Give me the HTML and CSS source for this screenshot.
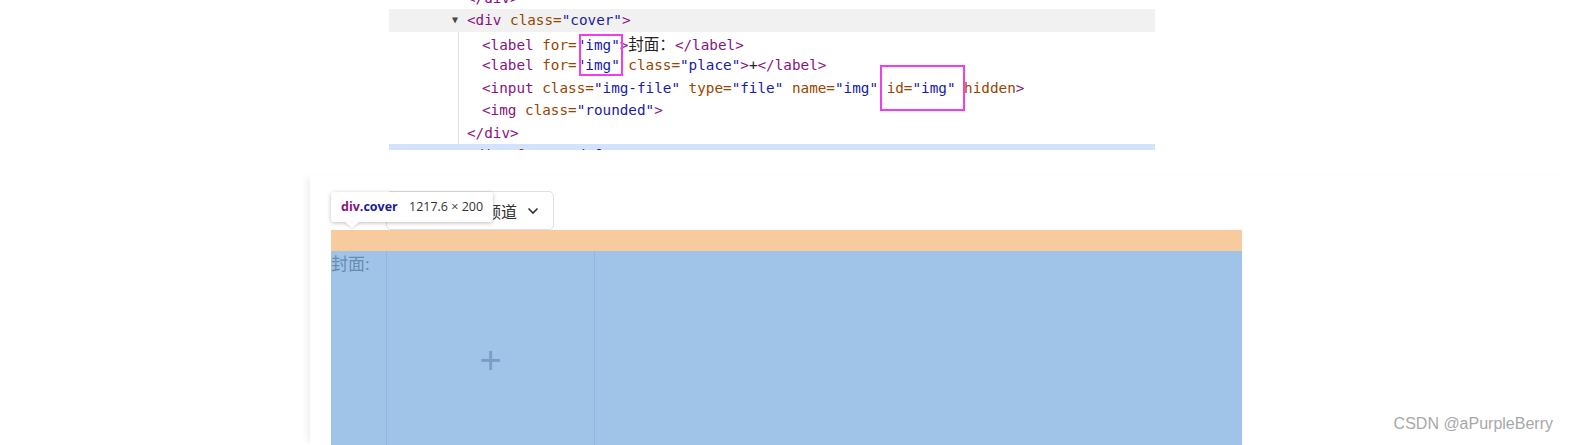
FILE: index.html
```html
<!DOCTYPE html>
<html lang="zh">
<head>
  <meta charset="UTF-8" />
  <title>div.cover</title>
  <link rel="stylesheet" href="styles.css">
</head>
<body>
  <div class="elements">
    <div class="tree">
      <div class="line lv1"><span class="tag">&lt;/div&gt;</span></div>
      <div class="line lv1 hover"><span class="arrow">▼</span><span class="tag">&lt;div </span><span class="attr">class=</span><span class="val">"cover"</span><span class="tag">&gt;</span></div>
      <div class="children">
        <div class="line lv2"><span class="tag">&lt;label </span><span class="attr">for=</span><span class="val">"img"</span><span class="tag">&gt;</span><span class="txt cjk">封面：</span><span class="tag">&lt;/label&gt;</span></div>
        <div class="line lv2"><span class="tag">&lt;label </span><span class="attr">for=</span><span class="val">"img"</span> <span class="attr">class=</span><span class="val">"place"</span><span class="tag">&gt;</span><span class="txt">+</span><span class="tag">&lt;/label&gt;</span></div>
        <div class="line lv2"><span class="tag">&lt;input </span><span class="attr">class=</span><span class="val">"img-file"</span> <span class="attr">type=</span><span class="val">"file"</span> <span class="attr">name=</span><span class="val">"img"</span> <span class="attr">id=</span><span class="val">"img"</span> <span class="attr">hidden</span><span class="tag">&gt;</span></div>
        <div class="line lv2"><span class="tag">&lt;img </span><span class="attr">class=</span><span class="val">"rounded"</span><span class="tag">&gt;</span></div>
        <div class="line lv1b"><span class="tag">&lt;/div&gt;</span></div>
      </div>
      <div class="line lv0 selected"><span class="arrow">▶</span><span class="tag">&lt;div </span><span class="attr">class=</span><span class="val">"title"</span><span class="tag">&gt;</span></div>
    </div>
    <div class="mark mark-for"></div>
    <div class="mark mark-id"></div>
  </div>

  <div class="page">
    <div class="select">
      <span class="select-text">选择频道</span>
      <svg class="chevron" width="12" height="8" viewBox="0 0 12 8"><path d="M1.5 1.5 L6 6 L10.5 1.5" fill="none" stroke="#333" stroke-width="1.6"/></svg>
    </div>
    <div class="margin-hl"></div>
    <div class="cover">
      <label class="cover-label">封面:</label>
      <label class="place"><span class="plus">+</span></label>
    </div>

    <div class="tip">
      <span class="tip-tag">div</span><span class="tip-cls">.cover</span>
      <span class="tip-size">1217.6 × 200</span>
    </div>
  </div>

  <div class="watermark">CSDN @aPurpleBerry</div>
</body>
</html>
```

FILE: styles.css
```css
body {
  margin: 0;
  background: #fff;
  font-family: "Noto Sans", "Noto Sans CJK SC", sans-serif;
  height: 445px;
  overflow: hidden;
  position: relative;
}

/* devtools elements panel */
.elements {
  position: relative;
  margin-left: 389px;
  width: 766px;
  height: 150px;
  overflow: hidden;
}

.tree {
  margin-top: -13.5px;
  font-family: "DejaVu Sans Mono", monospace;
  font-size: 14.3px;
}

.line {
  height: 22.5px;
  line-height: 22.5px;
  white-space: nowrap;
  position: relative;
}

.lv0 { padding-left: 78px; }
.lv1 { padding-left: 78px; }
.lv2 { padding-left: 23px; }
.lv1b { padding-left: 8px; }

.hover { background: #f1f1f1; }
.selected { background: #d3e3fd; }

.arrow {
  position: absolute;
  left: 63px;
  top: 0;
  font-size: 10px;
  color: #474747;
}

.children {
  margin-left: 69px;
  border-left: 1px solid #e3e3e3;
}

.tag { color: #881280; }
.attr { color: #994500; }
.val { color: #1a1aa6; }
.txt { color: #222; }
.cjk {
  font-family: "Noto Sans CJK SC", sans-serif;
  font-size: 15.5px;
}

.mark {
  position: absolute;
  border: 2px solid #f23cf2;
  box-sizing: border-box;
}

.mark-for {
  left: 190px;
  top: 34px;
  width: 44px;
  height: 42px;
}

.mark-id {
  left: 491px;
  top: 65px;
  width: 85px;
  height: 46px;
}

/* inspected page */
.page {
  position: relative;
  margin: 25px 0 0 310px;
  height: 270px;
  padding: 16px 0 0 21px;
  box-sizing: border-box;
  background: #fff;
  box-shadow: -6px 0 6px -3px rgba(40, 50, 90, 0.08);
  overflow: hidden;
}

.select {
  margin-left: 55px;
  width: 168px;
  height: 39px;
  box-sizing: border-box;
  border: 1px solid #dcdfe6;
  border-radius: 5px;
  display: flex;
  align-items: center;
  justify-content: flex-end;
  gap: 10px;
  padding-right: 14px;
  font-size: 16px;
  color: #333;
}

.margin-hl {
  width: 911px;
  height: 21px;
  background: #f7cb9d;
}

.cover {
  width: 911px;
  height: 240px;
  background: #a0c4e8;
  display: flex;
}

.cover-label {
  width: 55px;
  font-size: 17px;
  line-height: 22px;
  padding-top: 2px;
  color: #6a8bb0;
}

.place {
  width: 209px;
  height: 218px;
  box-sizing: border-box;
  border-left: 1px solid #94b8dd;
  border-right: 1px solid #94b8dd;
  display: flex;
  align-items: center;
  justify-content: center;
}

.plus {
  font-family: "Liberation Sans", sans-serif;
  font-size: 38px;
  color: #7a9dc3;
  line-height: 1;
}

.tip {
  position: absolute;
  left: 21px;
  top: 17px;
  width: 162px;
  height: 30px;
  box-sizing: border-box;
  background: #fff;
  border-radius: 3px;
  box-shadow: 0 1px 4px rgba(0, 0, 0, 0.25);
  padding-left: 10px;
  font-family: "Open Sans", sans-serif;
  font-size: 12.5px;
  line-height: 30px;
  white-space: nowrap;
}

.tip::after {
  content: "";
  position: absolute;
  left: 14px;
  bottom: -6px;
  border-left: 7px solid transparent;
  border-right: 7px solid transparent;
  border-top: 6px solid #fff;
  filter: drop-shadow(0 1px 1px rgba(0, 0, 0, 0.15));
}

.tip-tag { color: #881280; font-weight: 700; }
.tip-cls { color: #1a1aa6; font-weight: 700; }
.tip-size { color: #333; margin-left: 8px; }

.watermark {
  position: absolute;
  right: 17px;
  bottom: 12px;
  font-family: "Liberation Sans", sans-serif;
  font-size: 16px;
  color: #a8a8a8;
  text-shadow: 0 0 1px rgba(255, 255, 255, 0.8);
}
```
